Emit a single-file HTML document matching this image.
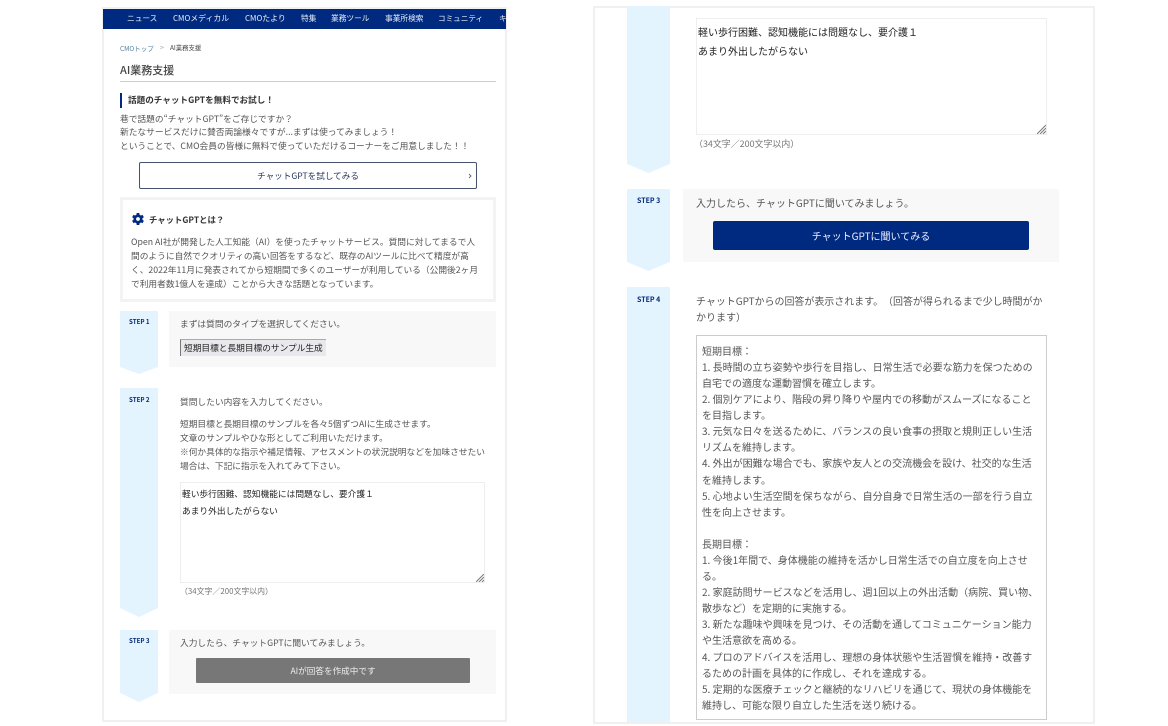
<!DOCTYPE html>
<html lang="ja"><head><meta charset="utf-8"><title>AI業務支援</title>
<style>
html,body{margin:0;padding:0;background:#fff}
body{width:1168px;height:726px;position:relative;overflow:hidden;font-family:"Noto Sans CJK JP","Liberation Sans",sans-serif;color:#555;text-spacing-trim:space-all;filter:blur(.25px)}
.a{position:absolute;box-sizing:border-box}
.t{position:absolute;white-space:nowrap;line-height:14px;height:14px;margin-top:-7px;font-size:8.72px}
.s{position:absolute;white-space:nowrap;line-height:10px;height:10px;margin-top:-5px;font-size:6.2px;font-weight:700;color:#00287a}
.r{font-size:10px}
.c{text-align:center}
svg{position:absolute;display:block}
</style></head><body>
<!-- left panel -->
<div class="a" style="left:102px;top:7px;width:405px;height:715px;border:2px solid #f0f0f0;overflow:hidden"></div>
<div class="a" style="left:103px;top:9px;width:403px;height:20px;background:#002a80;overflow:hidden;color:#e8edf6">
<span class="t" style="left:24px;top:10px;font-size:7.7px">ニュース</span>
<span class="t" style="left:70px;top:10px;font-size:7.9px">CMOメディカル</span>
<span class="t" style="left:142px;top:10px;font-size:7.9px">CMOたより</span>
<span class="t" style="left:198px;top:10px;font-size:7.7px">特集</span>
<span class="t" style="left:228px;top:10px;font-size:7.7px">業務ツール</span>
<span class="t" style="left:282px;top:10px;font-size:7.7px">事業所検索</span>
<span class="t" style="left:335px;top:10px;font-size:7.6px">コミュニティ</span>
<span class="t" style="left:396px;top:10px;font-size:7.7px">キ</span>
</div>
<span class="t" style="left:120px;top:48px;font-size:6.5px;color:#4c7c99">CMOトップ</span>
<span class="t" style="left:160px;top:48px;font-size:7px;color:#999">&gt;</span>
<span class="t" style="left:170px;top:48px;font-size:6.4px;color:#444">AI業務支援</span>
<span class="t" style="left:120px;top:70px;font-size:11px;font-weight:500;color:#444">AI業務支援</span>
<div class="a" style="left:120px;top:81px;width:376px;height:1px;background:#ccc"></div>
<div class="a" style="left:120px;top:93px;width:2px;height:15px;background:#002a80"></div>
<span class="t" style="left:128px;top:100px;font-size:8.6px;font-weight:700;color:#333">話題のチャットGPTを無料でお試し！</span>
<span class="t" style="left:120px;top:118.5px">巷で話題の“チャットGPT”をご存じですか？</span>
<span class="t" style="left:120px;top:132px">新たなサービスだけに賛否両論様々ですが...まずは使ってみましょう！</span>
<span class="t" style="left:120px;top:146px">ということで、CMO会員の皆様に無料で使っていただけるコーナーをご用意しました！！</span>
<div class="a" style="left:139px;top:162px;width:338px;height:27px;border:1px solid #445270;border-radius:2px"></div>
<span class="t c" style="left:139px;width:338px;top:175.5px;color:#27365a;font-size:8.6px">チャットGPTを試してみる</span>
<svg style="left:468px;top:173px" width="4" height="6"><path d="M1 1L3 3L1 5" fill="none" stroke="#666" stroke-width=".9"/></svg>

<div class="a" style="left:120px;top:197px;width:376px;height:105px;border:3px solid #f3f3f3"></div>
<svg style="left:132px;top:213px" width="12" height="12" viewBox="0 0 12 12"><g fill="#002a80"><circle cx="6" cy="6" r="4.6"/><rect x="4.6" y="0" width="2.8" height="12"/><rect x="4.6" y="0" width="2.8" height="12" transform="rotate(60 6 6)"/><rect x="4.6" y="0" width="2.8" height="12" transform="rotate(120 6 6)"/></g><circle cx="6" cy="6" r="1.9" fill="#fff"/></svg>
<span class="t" style="left:149px;top:219.5px;font-weight:700;color:#333;font-size:8.4px">チャットGPTとは？</span>
<span class="t" style="left:131px;top:241.5px">Open AI社が開発した人工知能（AI）を使ったチャットサービス。質問に対してまるで人</span>
<span class="t" style="left:131px;top:255.5px">間のように自然でクオリティの高い回答をするなど、既存のAIツールに比べて精度が高</span>
<span class="t" style="left:131px;top:269.5px">く、2022年11月に発表されてから短期間で多くのユーザーが利用している（公開後2ヶ月</span>
<span class="t" style="left:131px;top:283.5px">で利用者数1億人を達成）ことから大きな話題となっています。</span>

<svg style="left:120px;top:311px" width="38" height="64"><path d="M0 0H38V56L19 63L0 56Z" fill="#e4f4ff"/></svg>
<span class="s" style="left:129px;top:322px">STEP 1</span>
<div class="a" style="left:169px;top:311px;width:327px;height:56px;background:#f8f8f8"></div>
<span class="t" style="left:180px;top:323.5px">まずは質問のタイプを選択してください。</span>
<div class="a" style="left:180px;top:339px;width:146px;height:17px;background:#e9e9ed;border-left:1px solid #777;border-top:1px solid #aaa"></div>
<span class="t" style="left:184px;top:348px;font-size:8.7px;color:#222">短期目標と長期目標のサンプル生成</span>

<svg style="left:120px;top:388px" width="38" height="230"><path d="M0 0H38V220L19 229L0 220Z" fill="#e4f4ff"/></svg>
<span class="s" style="left:129px;top:399.5px">STEP 2</span>
<span class="t" style="left:180px;top:402px">質問したい内容を入力してください。</span>
<span class="t" style="left:180px;top:424px">短期目標と長期目標のサンプルを各々5個ずつAIに生成させます。</span>
<span class="t" style="left:180px;top:438px">文章のサンプルやひな形としてご利用いただけます。</span>
<span class="t" style="left:180px;top:452px">※何か具体的な指示や補足情報、アセスメントの状況説明などを加味させたい</span>
<span class="t" style="left:180px;top:466px">場合は、下記に指示を入れてみて下さい。</span>
<div class="a" style="left:180px;top:482px;width:305px;height:101px;border:1px solid #eee"></div>
<span class="t" style="left:182px;top:494px;color:#222">軽い歩行困難、認知機能には問題なし、要介護１</span>
<span class="t" style="left:182px;top:511px;color:#222">あまり外出したがらない</span>
<svg style="left:476px;top:574px" width="8" height="8"><path d="M0 8L8 0M3 8L8 3M6 8L8 6" stroke="#777" stroke-width="1"/></svg>
<span class="t" style="left:180px;top:592px;font-size:7.9px;color:#777">（34文字／200文字以内）</span>

<svg style="left:120px;top:630px" width="38" height="73"><path d="M0 0H38V63L19 72L0 63Z" fill="#e4f4ff"/></svg>
<span class="s" style="left:129px;top:641px">STEP 3</span>
<div class="a" style="left:169px;top:630px;width:327px;height:64px;background:#f8f8f8"></div>
<span class="t" style="left:180px;top:643px">入力したら、チャットGPTに聞いてみましょう。</span>
<div class="a" style="left:196px;top:658px;width:274px;height:25px;background:#777;border-radius:1px"></div>
<span class="t c" style="left:196px;width:274px;top:671px;color:#eee;font-size:8.6px">AIが回答を作成中です</span>

<!-- right panel -->
<div class="a" style="left:593px;top:6px;width:502px;height:718px;border:2px solid #f0f0f0"></div>
<svg style="left:627px;top:6px" width="43" height="168"><path d="M0 0H43V158L21.5 167L0 158Z" fill="#e4f4ff"/></svg>
<div class="a" style="left:696px;top:18px;width:351px;height:117px;border:1px solid #eee"></div>
<span class="t r" style="left:698px;top:32px;color:#222">軽い歩行困難、認知機能には問題なし、要介護１</span>
<span class="t r" style="left:698px;top:51px;color:#222">あまり外出したがらない</span>
<svg style="left:1037px;top:124px" width="9" height="10"><path d="M0 10L9 1M3 10L9 4M6 10L9 7" stroke="#777" stroke-width="1"/></svg>
<span class="t" style="left:694px;top:144px;font-size:8.95px;color:#777">（34文字／200文字以内）</span>

<svg style="left:627px;top:189px" width="43" height="83"><path d="M0 0H43V73L21.5 82L0 73Z" fill="#e4f4ff"/></svg>
<span class="s" style="left:637px;top:201px;font-size:7px">STEP 3</span>
<div class="a" style="left:683px;top:189px;width:376px;height:73px;background:#f8f8f8"></div>
<span class="t r" style="left:696px;top:203px">入力したら、チャットGPTに聞いてみましょう。</span>
<div class="a" style="left:713px;top:221px;width:316px;height:29px;background:#002a80;border-radius:2px"></div>
<span class="t c r" style="left:713px;width:316px;top:236px;color:#eef">チャットGPTに聞いてみる</span>

<div class="a" style="left:627px;top:287px;width:43px;height:435px;background:#e4f4ff"></div>
<span class="s" style="left:637px;top:300px;font-size:7px">STEP 4</span>
<span class="t r" style="left:696px;top:301px;letter-spacing:-.04px">チャットGPTからの回答が表示されます。（回答が得られるまで少し時間がか</span>
<span class="t r" style="left:696px;top:317px">かります）</span>
<div class="a" style="left:696px;top:335px;width:351px;height:385px;border:1px solid #ccc"></div>
<span class="t r" style="left:702px;top:351px">短期目標：</span>
<span class="t r" style="left:702px;top:367px">1. 長時間の立ち姿勢や歩行を目指し、日常生活で必要な筋力を保つための</span>
<span class="t r" style="left:702px;top:383px">自宅での適度な運動習慣を確立します。</span>
<span class="t r" style="left:702px;top:399px">2. 個別ケアにより、階段の昇り降りや屋内での移動がスムーズになること</span>
<span class="t r" style="left:702px;top:415px">を目指します。</span>
<span class="t r" style="left:702px;top:431px">3. 元気な日々を送るために、バランスの良い食事の摂取と規則正しい生活</span>
<span class="t r" style="left:702px;top:447px">リズムを維持します。</span>
<span class="t r" style="left:702px;top:463px">4. 外出が困難な場合でも、家族や友人との交流機会を設け、社交的な生活</span>
<span class="t r" style="left:702px;top:480px">を維持します。</span>
<span class="t r" style="left:702px;top:496px">5. 心地よい生活空間を保ちながら、自分自身で日常生活の一部を行う自立</span>
<span class="t r" style="left:702px;top:512px">性を向上させます。</span>
<span class="t r" style="left:702px;top:544px">長期目標：</span>
<span class="t r" style="left:702px;top:560px">1. 今後1年間で、身体機能の維持を活かし日常生活での自立度を向上させ</span>
<span class="t r" style="left:702px;top:576px">る。</span>
<span class="t r" style="left:702px;top:592px">2. 家庭訪問サービスなどを活用し、週1回以上の外出活動（病院、買い物、</span>
<span class="t r" style="left:702px;top:608px">散歩など）を定期的に実施する。</span>
<span class="t r" style="left:702px;top:624px">3. 新たな趣味や興味を見つけ、その活動を通してコミュニケーション能力</span>
<span class="t r" style="left:702px;top:640px">や生活意欲を高める。</span>
<span class="t r" style="left:702px;top:657px">4. プロのアドバイスを活用し、理想の身体状態や生活習慣を維持・改善す</span>
<span class="t r" style="left:702px;top:673px">るための計画を具体的に作成し、それを達成する。</span>
<span class="t r" style="left:702px;top:689px">5. 定期的な医療チェックと継続的なリハビリを通じて、現状の身体機能を</span>
<span class="t r" style="left:702px;top:705px">維持し、可能な限り自立した生活を送り続ける。</span>
</body></html>
